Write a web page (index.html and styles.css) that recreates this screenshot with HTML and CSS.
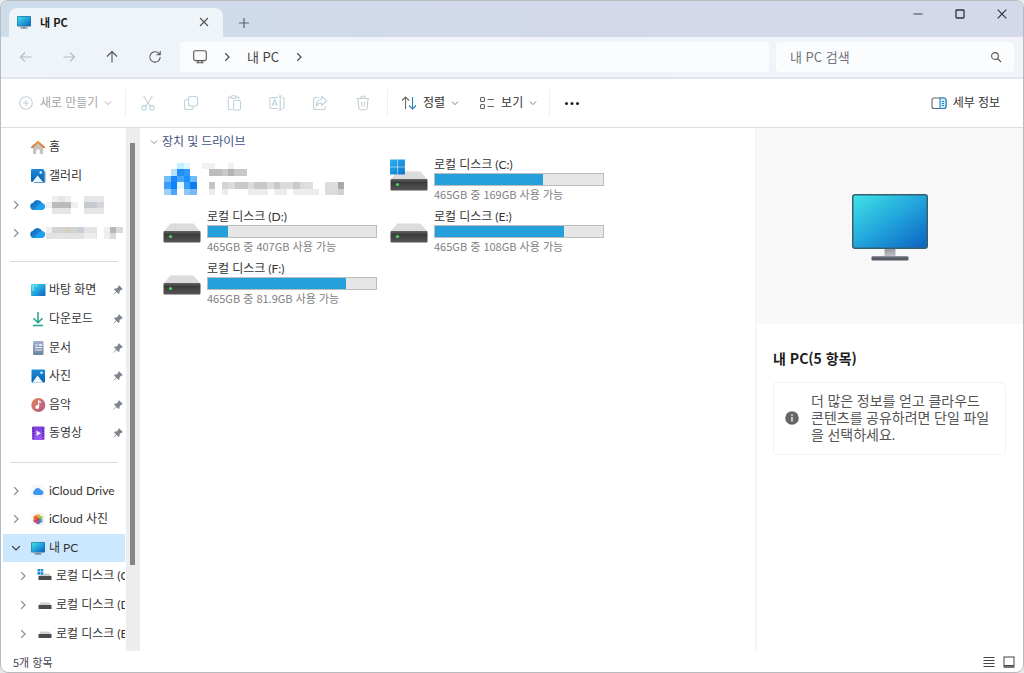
FILE: index.html
```html
<!DOCTYPE html>
<html lang="ko">
<head>
<meta charset="utf-8">
<title>내 PC</title>
<link rel="stylesheet" href="styles.css">
</head>
<body>
<svg class="defs" aria-hidden="true">
  <defs>
    <linearGradient id="g-screen" x1="0" y1="0" x2="1" y2="1"><stop offset="0" stop-color="#3fe3e6"/><stop offset=".5" stop-color="#22a5dc"/><stop offset="1" stop-color="#0c62c2"/></linearGradient>
    <linearGradient id="g-metal" x1="0" y1="0" x2="0" y2="1"><stop offset="0" stop-color="#9599a2"/><stop offset="1" stop-color="#c3c6cc"/></linearGradient>
    <linearGradient id="g-drive" x1="0" y1="0" x2="0" y2="1"><stop offset="0" stop-color="#636363"/><stop offset=".3" stop-color="#3c3c3c"/><stop offset="1" stop-color="#555"/></linearGradient>
    <linearGradient id="g-win" x1="0" y1="0" x2="1" y2="1"><stop offset="0" stop-color="#2fb0ef"/><stop offset="1" stop-color="#0876cc"/></linearGradient>
    <linearGradient id="g-blue" x1="0" y1="0" x2="0" y2="1"><stop offset="0" stop-color="#1c8ada"/><stop offset="1" stop-color="#0a62ad"/></linearGradient>
    <linearGradient id="g-music" x1="0" y1="0" x2="1" y2="1"><stop offset="0" stop-color="#e98458"/><stop offset="1" stop-color="#b0558f"/></linearGradient>
    <linearGradient id="g-cloud" x1="0" y1="0" x2="1" y2="1"><stop offset="0" stop-color="#0a5cae"/><stop offset="1" stop-color="#27a3ee"/></linearGradient>
    <linearGradient id="g-roof" x1="0" y1="0" x2="0" y2="1"><stop offset="0" stop-color="#f0a24c"/><stop offset="1" stop-color="#c56a35"/></linearGradient>
    <linearGradient id="g-video" x1="0" y1="0" x2="0" y2="1"><stop offset="0" stop-color="#7a3fd6"/><stop offset="1" stop-color="#a05cf2"/></linearGradient>
    <linearGradient id="g-doc" x1="0" y1="0" x2="0" y2="1"><stop offset="0" stop-color="#a2b4cb"/><stop offset="1" stop-color="#71849f"/></linearGradient>
  </defs>
  <symbol id="i-pc" viewBox="0 0 16 16"><rect x="1" y="2" width="14" height="10.500" rx="1" fill="#2a6a8c"/><rect x="1.600" y="2.600" width="12.800" height="9.300" fill="url(#g-screen)"/><path d="M7 12.500h2v1.200H7z" fill="#7d8792"/><path d="M4.500 13.400h7v1.100h-7z" fill="#5b6570"/></symbol>
  <symbol id="i-chev" viewBox="0 0 10 10"><path d="M3.2 1.2 7 5 3.2 8.8" fill="none" stroke="currentColor" stroke-width="1.2"/></symbol>
  <symbol id="i-down" viewBox="0 0 10 10"><path d="M1.2 3.2 5 7 8.8 3.2" fill="none" stroke="currentColor" stroke-width="1.2"/></symbol>
  <symbol id="i-drive" viewBox="0 0 38 34"><path d="M8 14h22l7 8H1z" fill="#dcdcde"/><path d="M8 14h22l.9 1H7.1z" fill="#ececee"/><rect x="0.5" y="22" width="37" height="11.5" rx="1" fill="url(#g-drive)"/><circle cx="7.5" cy="27.5" r="1.6" fill="#4fd35f"/></symbol>
  <symbol id="i-sdrive" viewBox="0 0 16 16"><path d="M4 5.500h8l2.500 3h-13z" fill="#cfcfd1"/><rect x="1.500" y="8" width="13" height="4" rx=".6" fill="#4b4b4b"/></symbol>
  <symbol id="i-cloud" viewBox="0 0 16 16"><path d="M4.200 13A3.700 3.700 0 0 1 3.300 5.700 5 5 0 0 1 12 5.900 3.600 3.600 0 0 1 12.200 13z" fill="#1fa0ee"/><path d="M4.200 13A3.700 3.700 0 0 1 3.300 5.700 5 5 0 0 1 12 5.900L9 7.500z" fill="url(#g-cloud)"/></symbol>
  <symbol id="i-pin" viewBox="0 0 12 12"><path d="M7 1.200 10.800 5 9.800 5.800 9.200 5.700 7.600 7.300 7.500 9.200 6.600 10 4.500 7.900 1.500 10.700 1.200 10.400 4 7.400 2 5.300 2.800 4.500 4.700 4.400 6.300 2.800 6.200 2.100z" fill="#7d868f"/></symbol>
</svg>

<div class="window">
  <header class="titlebar">
    <div class="tab">
      <svg class="ic16"><use href="#i-pc"/></svg>
      <span class="tab-title">내 PC</span>
      <button class="plain" aria-label="탭 닫기"><svg class="ic10" viewBox="0 0 10 10"><path d="M1 1l8 8M9 1 1 9" fill="none" stroke="#555" stroke-width="1.100"/></svg></button>
    </div>
    <button class="plain new-tab" aria-label="새 탭"><svg class="ic10" viewBox="0 0 10 10"><path d="M5 0v10M0 5h10" fill="none" stroke="#596070" stroke-width="1.200"/></svg></button>
    <div class="controls">
      <button class="plain" aria-label="최소화"><svg class="ic10" viewBox="0 0 10 10"><path d="M.5 5h9" stroke="#3c4050" stroke-width="1.200"/></svg></button>
      <button class="plain" aria-label="최대화"><svg class="ic10" viewBox="0 0 10 10"><rect x="1" y="1" width="8" height="8" rx=".8" fill="none" stroke="#2c3040" stroke-width="1.300"/></svg></button>
      <button class="plain" aria-label="닫기"><svg class="ic10" viewBox="0 0 10 10"><path d="M.7.7l8.600 8.600M9.300.7.7 9.300" stroke="#2c3040" stroke-width="1.200"/></svg></button>
    </div>
  </header>

  <nav class="navbar">
    <div class="nav-buttons">
      <button class="plain off" aria-label="뒤로"><svg class="ic14" viewBox="0 0 14 14"><path d="M12.500 7h-11M6 2.500 1.500 7 6 11.500"/></svg></button>
      <button class="plain off" aria-label="앞으로"><svg class="ic14" viewBox="0 0 14 14"><path d="M1.500 7h11M8 2.500 12.500 7 8 11.500"/></svg></button>
      <button class="plain" aria-label="위로"><svg class="ic14" viewBox="0 0 14 14"><path d="M7 12.500v-11M2 6.500l5-5 5 5"/></svg></button>
      <button class="plain" aria-label="새로 고침"><svg class="ic14" viewBox="0 0 14 14"><path d="M12.200 7A5.200 5.200 0 1 1 10.800 3.400L12 4.600M12.200 1v3.700H8.500"/></svg></button>
    </div>
    <div class="address">
      <svg class="ic14" viewBox="0 0 14 14"><rect x=".7" y=".7" width="12.600" height="9.900" rx="1.600"/><path d="M5 10.600v2M9 10.600v2M3.500 12.800h7"/></svg>
      <svg class="ic10"><use href="#i-chev"/></svg>
      <a class="crumb" href="#">내 PC</a>
      <svg class="ic10"><use href="#i-chev"/></svg>
    </div>
    <label class="search">
      <input type="search" placeholder="내 PC 검색" aria-label="내 PC 검색">
      <svg class="ic12" viewBox="0 0 12 12"><circle cx="5" cy="5" r="3.400"/><path d="M7.500 7.500l3.500 3.500"/></svg>
    </label>
  </nav>

  <div class="toolbar">
    <button class="cmd new off"><svg class="ic16" viewBox="0 0 16 16"><circle cx="8" cy="8" r="6.300"/><path d="M8 5v6M5 8h6" class="tint"/></svg><span>새로 만들기</span><svg class="ic8"><use href="#i-down"/></svg></button>
    <div class="tools off">
      <button class="plain" aria-label="잘라내기"><svg class="ic16" viewBox="0 0 16 16"><path d="M3.500.8l6.700 10.400M12.500.8 5.800 11.200"/><circle cx="4" cy="12.800" r="2.200" class="tint"/><circle cx="12" cy="12.800" r="2.200" class="tint"/></svg></button>
      <button class="plain" aria-label="복사"><svg class="ic16" viewBox="0 0 16 16"><rect x="5.500" y="1.500" width="9" height="9.500" rx="2" class="tint"/><path d="M5.200 4.800H3.500a2 2 0 0 0-2 2v5.700a2 2 0 0 0 2 2H8a2 2 0 0 0 2-2v-1.300"/></svg></button>
      <button class="plain" aria-label="붙여넣기"><svg class="ic16" viewBox="0 0 16 16"><path d="M6.500 14.500H3.500a1.200 1.200 0 0 1-1.200-1.200v-10a1.200 1.200 0 0 1 1.200-1.200h1.500M10 2.100h1.500a1.200 1.200 0 0 1 1.200 1.200v1.200"/><rect x="5" y=".8" width="5" height="2.600" rx="1.200"/><rect x="7.500" y="5.500" width="7" height="9.500" rx="1.300" class="tint"/></svg></button>
      <button class="plain" aria-label="이름 바꾸기"><svg class="ic16" viewBox="0 0 16 16"><path d="M9 2.500H2.500A1.700 1.700 0 0 0 .8 4.200v7.600a1.700 1.700 0 0 0 1.700 1.700H9M13 2.500h.8a1.500 1.500 0 0 1 1.400 1.700v7.600a1.500 1.500 0 0 1-1.400 1.700H13"/><path d="M3 11l2.700-6.500L8.400 11M4 9h3.500M11.200 1v14M9.700 1h3M9.700 15h3" class="tint"/></svg></button>
      <button class="plain" aria-label="공유"><svg class="ic16" viewBox="0 0 16 16"><path d="M6.500 2.500h-3a2 2 0 0 0-2 2v8a2 2 0 0 0 2 2h8a2 2 0 0 0 2-2v-1.300"/><path d="M9.700 1.500 14.800 6l-5.100 4.500V8C7.300 8 5.700 8.700 4.300 10.800 4.500 7 6.300 4.500 9.700 4.200z" class="tint"/></svg></button>
      <button class="plain" aria-label="삭제"><svg class="ic16" viewBox="0 0 16 16"><path d="M1.500 3.500h13M5.800 3.200a2.200 2.200 0 0 1 4.400 0M3 3.700l.9 9.800a1.500 1.500 0 0 0 1.500 1.300h5.200a1.500 1.500 0 0 0 1.500-1.300l.9-9.800M6.700 6.500v5M9.300 6.500v5"/></svg></button>
    </div>
    <div class="views">
      <button class="cmd"><svg class="ic16" viewBox="0 0 16 16"><path d="M4.500 14V2M1 5.500 4.500 2 8 5.500"/><path d="M11.500 2v12M8 10.500l3.500 3.500 3.500-3.500" class="tint"/></svg><span>정렬</span><svg class="ic8"><use href="#i-down"/></svg></button>
      <button class="cmd"><svg class="ic16" viewBox="0 0 16 16"><rect x="1.500" y="2.500" width="4" height="4" rx="1"/><rect x="1.500" y="9.500" width="4" height="4" rx="1"/><path d="M8.500 4.500h6.500M8.500 11.500h6.500"/></svg><span>보기</span><svg class="ic8"><use href="#i-down"/></svg></button>
    </div>
    <button class="plain more" aria-label="자세히"><svg class="ic16" viewBox="0 0 16 16"><g fill="#222" stroke="none"><circle cx="2.500" cy="8.500" r="1.500"/><circle cx="8" cy="8.500" r="1.500"/><circle cx="13.500" cy="8.500" r="1.500"/></g></svg></button>
    <button class="cmd details-toggle"><svg class="ic16" viewBox="0 0 16 16"><rect x="1" y="3" width="14" height="10.500" rx="2"/><path d="M9 3h4a2 2 0 0 1 2 2v6.500a2 2 0 0 1-2 2H9z" class="tint tintfill"/><path d="M11 6.500h2M11 8.500h2M11 10.500h2" class="tint"/></svg><span>세부 정보</span></button>
  </div>

  <div class="body">
    <aside class="sidebar">
      <ul class="tree">
        <li><a href="#"><i class="tw"></i><svg class="ic16" viewBox="0 0 16 16"><path d="M3 7.500 8 3l5 4.500V15H9.800v-4.500H6.200V15H3z" fill="#c9c3c0"/><path d="M.7 8.300 8 1.500l7.300 6.800-1.300 1.300L8 4.200 2 9.600z" fill="url(#g-roof)"/></svg><span>홈</span></a></li>
        <li><a href="#"><i class="tw"></i><svg class="ic16" viewBox="0 0 16 16"><rect x="3.500" y="3" width="12" height="12" rx="1.500" fill="#6796c4"/><rect x="1" y="1" width="13" height="13" rx="1.300" fill="url(#g-blue)"/><path d="M2.500 14 7.500 7.500 13 14z" fill="#e9f5fd"/><circle cx="10.700" cy="4.500" r="1.200" fill="#e9f5fd"/></svg><span>갤러리</span></a></li>
        <li><a href="#" aria-label="OneDrive"><svg class="tw"><use href="#i-chev"/></svg><svg class="ic16"><use href="#i-cloud"/></svg>
          <svg class="mosaic" viewBox="0 0 78 20"><path d="M0 7h6v6H0zM6 1h6v6H6zM19 1h6v6h-6zM25 7h7v6h-7z" fill="#f0eff0"/><path d="M12 1h7v6h-7zM6 13h19v6H6zM38 1h20v6H38zM38 13h20v6H38z" fill="#e6e5e7"/><path d="M6 7h19v6H6z" fill="#bcbabd"/><path d="M38 7h13v6H38z" fill="#c6c9d0"/><path d="M51 7h7v6h-7z" fill="#d6d6da"/></svg></a></li>
        <li><a href="#" aria-label="OneDrive"><svg class="tw"><use href="#i-chev"/></svg><svg class="ic16"><use href="#i-cloud"/></svg>
          <svg class="mosaic" viewBox="0 0 78 20"><path d="M0 4h51v12H0z" fill="#e4e3e3"/><path d="M0 4h6v6H0zM38 10h12v6H38zM58 4h6v12h-6z" fill="#eee"/><path d="M6 4h13v6H6zM25 4h7v6h-7z" fill="#d4d3d3"/><path d="M19 4h6v6h-6z" fill="#d5d0bd"/><path d="M32 4h6v6h-6z" fill="#c6cdd6"/><path d="M64 4h6v6h-6z" fill="#b7b6b9"/><path d="M70 4h7v6h-7zM64 10h6v6h-6z" fill="#dadada"/></svg></a></li>
        <li class="rule"></li>
        <li><a href="#"><i class="tw"></i><svg class="ic16" viewBox="0 0 16 16"><rect x="1" y="2" width="14.500" height="12" rx="1" fill="url(#g-screen)"/><path d="M2.500 4h1.500M2.500 6h1.500M2.500 8h1.500M5.500 4h1.500" stroke="#dff7fc"/></svg><span>바탕 화면</span></a><svg class="pin"><use href="#i-pin"/></svg></li>
        <li><a href="#"><i class="tw"></i><svg class="ic16" viewBox="0 0 16 16"><path d="M8 1v10.500M3.500 7.200 8 11.700l4.500-4.500M3 14.500h10" fill="none" stroke="#21a58f" stroke-width="1.500"/></svg><span>다운로드</span></a><svg class="pin"><use href="#i-pin"/></svg></li>
        <li><a href="#"><i class="tw"></i><svg class="ic16" viewBox="0 0 16 16"><rect x="3" y="1" width="10.500" height="14" rx="1" fill="url(#g-doc)"/><path d="M5 5h3M5 7.500h7M5 10h7" stroke="#e9eff7" stroke-width="1.200"/><path d="M9 4h3v2H9z" fill="#dfe9f5"/></svg><span>문서</span></a><svg class="pin"><use href="#i-pin"/></svg></li>
        <li><a href="#"><i class="tw"></i><svg class="ic16" viewBox="0 0 16 16"><rect x="1.500" y="1.500" width="13.500" height="13" rx="1" fill="url(#g-blue)"/><path d="M2.500 14.500 7.500 7.500l5.500 7z" fill="#f2f9fe"/><circle cx="11.500" cy="4.800" r="1.200" fill="#e9f5fd"/></svg><span>사진</span></a><svg class="pin"><use href="#i-pin"/></svg></li>
        <li><a href="#"><i class="tw"></i><svg class="ic16" viewBox="0 0 16 16"><circle cx="8.300" cy="8" r="7" fill="url(#g-music)"/><circle cx="7.200" cy="10" r="1.900" fill="#fff"/><path d="M8.600 10V3.800l2.400 1.600" fill="none" stroke="#fff" stroke-width="1.200"/></svg><span>음악</span></a><svg class="pin"><use href="#i-pin"/></svg></li>
        <li><a href="#"><i class="tw"></i><svg class="ic16" viewBox="0 0 16 16"><rect x="2" y="1.500" width="12.500" height="13.500" rx="1" fill="url(#g-video)"/><path d="M3.500 3v11M13 3v11" stroke="#4a2397" stroke-width="1.300" stroke-dasharray="1.500 1"/><path d="M6.500 5.500 11 8.200l-4.500 2.700z" fill="#f4ecff"/></svg><span>동영상</span></a><svg class="pin"><use href="#i-pin"/></svg></li>
        <li class="rule"></li>
        <li><a href="#"><svg class="tw"><use href="#i-chev"/></svg><svg class="ic16" viewBox="0 0 16 16"><rect x="1.500" y="1.500" width="13" height="13" rx="3" fill="#f5f7fa"/><path d="M5 12A2.400 2.400 0 0 1 4.300 7.500 3.600 3.600 0 0 1 11 7a2.600 2.600 0 0 1 .8 5z" fill="#3f96f3"/></svg><span>iCloud Drive</span></a></li>
        <li><a href="#"><svg class="tw"><use href="#i-chev"/></svg><svg class="ic16" viewBox="0 0 16 16"><rect x="1.500" y="1.500" width="13" height="13" rx="3" fill="#f3f3f3"/><circle cx="8" cy="5.500" r="2.300" fill="#f2a93b"/><circle cx="10.500" cy="7" r="2.200" fill="#a3c64b"/><circle cx="10.300" cy="9.800" r="2.200" fill="#4b9ed8"/><circle cx="8" cy="11" r="2.200" fill="#7a67b8"/><circle cx="5.600" cy="9.600" r="2.200" fill="#cf4b68"/><circle cx="5.600" cy="6.700" r="2.200" fill="#ee6b34"/><circle cx="8" cy="8.300" r="1.500" fill="#b04a35"/></svg><span>iCloud 사진</span></a></li>
        <li class="selected"><a href="#"><svg class="tw"><use href="#i-down"/></svg><svg class="ic16"><use href="#i-pc"/></svg><span>내 PC</span></a></li>
        <li class="child"><a href="#"><svg class="tw"><use href="#i-chev"/></svg><svg class="ic16" viewBox="0 0 16 16"><path d="M4 5.500h8l2.500 3h-13z" fill="#cfcfd1"/><rect x="1.500" y="8" width="13" height="4" rx=".6" fill="#4b4b4b"/><path d="M.5 1h2.600v2.600H.5zM3.600 1h2.600v2.600H3.600zM.5 4.100h2.600v2.600H.5zM3.600 4.100h2.600v2.600H3.600z" fill="#1f8fd8"/></svg><span>로컬 디스크 (C:)</span></a></li>
        <li class="child"><a href="#"><svg class="tw"><use href="#i-chev"/></svg><svg class="ic16"><use href="#i-sdrive"/></svg><span>로컬 디스크 (D:)</span></a></li>
        <li class="child"><a href="#"><svg class="tw"><use href="#i-chev"/></svg><svg class="ic16"><use href="#i-sdrive"/></svg><span>로컬 디스크 (E:)</span></a></li>
      </ul>
      <div class="scroll"><div class="thumb"></div></div>
    </aside>

    <main class="content">
      <h2 class="group"><svg class="ic8"><use href="#i-down"/></svg>장치 및 드라이브</h2>
      <div class="drives">
        <div class="drive">
          <svg class="mosaic-wide" viewBox="0 0 184 34" aria-label="iCloud">
            <g transform="translate(1 0)">
              <path d="M13 0h7v6h-7z" fill="#c5f0fb"/><path d="M20 0h6v6h-6z" fill="#e2f7fe"/>
              <path d="M7 6h6v7H7z" fill="#b5def9"/><path d="M13 6h7v7h-7z" fill="#1e90f8"/><path d="M20 6h6v7h-6z" fill="#3398fb"/>
              <path d="M0 13h7v6H0z" fill="#74bdfb"/><path d="M7 13h6v6H7z" fill="#1b87fb"/><path d="M13 13h7v6h-7z" fill="#45a6fc"/><path d="M20 13h6v6h-6z" fill="#1c90fc"/><path d="M26 13h7v6h-7z" fill="#6bbcfb"/>
              <path d="M0 19h7v7H0z" fill="#3d9dfa"/><path d="M7 19h6v7H7z" fill="#0a84fb"/><path d="M13 19h7v7h-7z" fill="#e4f5ff"/><path d="M20 19h6v7h-6z" fill="#3aa0fc"/><path d="M26 19h7v7h-7z" fill="#0d7cee"/>
              <path d="M0 26h7v6H0z" fill="#9ed2fd"/><path d="M7 26h6v6H7z" fill="#4ca7f6"/><path d="M20 26h6v6h-6z" fill="#8ec8fa"/><path d="M26 26h7v6h-7z" fill="#78b8f5"/>
            </g>
            <g transform="translate(39 0)">
              <path d="M0 0h7v6H0zM7 0h6v6H7zM26 0h6v6h-6z" fill="#f0f0f0"/><path d="M7 6h13v7H7z" fill="#bdbdbd"/><path d="M20 6h6v7h-6z" fill="#c9c9c9"/><path d="M26 6h6v7h-6z" fill="#b3b3b3"/><path d="M32 6h13v7H32z" fill="#c8c8c8"/>
              <path d="M7 19h6v7H7z" fill="#c3c3c3"/><path d="M20 19h6v7h-6z" fill="#d3d3d3"/><path d="M26 19h78v7H26z" fill="#dbdbdb"/><path d="M33 19h13v7H33zM52 19h13v7H52zM72 19h6v7h-6zM91 19h7v7h-7z" fill="#c9c9c9"/>
              <path d="M7 26h6v6H7zM20 26h6v6h-6zM46 26h20v6H46zM72 26h13v6H72zM91 26h26v6H91z" fill="#ececec"/><path d="M104 19h7v7h-7z" fill="#dedede"/><path d="M123 19h13v13h-13z" fill="#dcdcdc"/><path d="M136 19h6v7h-6z" fill="#a8a8a8"/><path d="M136 26h6v6h-6z" fill="#d0d0d0"/>
            </g>
          </svg>
        </div>
        <div class="drive">
          <svg class="drive-icon" viewBox="0 0 38 34"><use href="#i-drive"/><path d="M0 2.500h7.200v7.200H0zM7.700 2.500h7.200v7.200H7.700zM0 10.200h7.200v7.200H0zM7.700 10.200h7.200v7.200H7.700z" fill="url(#g-win)"/></svg>
          <div class="drive-info"><span class="name">로컬 디스크 (C:)</span><div class="bar"><div class="fill" style="width:64%"></div></div><span class="free">465GB 중 169GB 사용 가능</span></div>
        </div>
        <div class="drive">
          <svg class="drive-icon"><use href="#i-drive"/></svg>
          <div class="drive-info"><span class="name">로컬 디스크 (D:)</span><div class="bar"><div class="fill" style="width:12%"></div></div><span class="free">465GB 중 407GB 사용 가능</span></div>
        </div>
        <div class="drive">
          <svg class="drive-icon"><use href="#i-drive"/></svg>
          <div class="drive-info"><span class="name">로컬 디스크 (E:)</span><div class="bar"><div class="fill" style="width:77%"></div></div><span class="free">465GB 중 108GB 사용 가능</span></div>
        </div>
        <div class="drive">
          <svg class="drive-icon"><use href="#i-drive"/></svg>
          <div class="drive-info"><span class="name">로컬 디스크 (F:)</span><div class="bar"><div class="fill" style="width:82%"></div></div><span class="free">465GB 중 81.9GB 사용 가능</span></div>
        </div>
      </div>
    </main>

    <aside class="details">
      <div class="preview">
        <svg class="pc-large" viewBox="0 0 76 68"><rect x="0" y="0" width="76" height="55" rx="3" fill="#35606f"/><rect x="1.500" y="1.500" width="73" height="52" rx="1.500" fill="url(#g-screen)"/><path d="M32.500 55h11v8h-11z" fill="url(#g-metal)"/><rect x="19.500" y="62.500" width="37" height="4" rx="1" fill="#565b64"/><path d="M20.500 62h35v1.200h-35z" fill="#8a8f98"/></svg>
      </div>
      <h1 class="details-title">내 PC(5 항목)</h1>
      <div class="info">
        <svg class="ic14" viewBox="0 0 14 14"><circle cx="7" cy="7" r="6.800" fill="#666"/><path d="M7 6v4.500M7 3.300v1.400" stroke="#fff" stroke-width="1.300"/></svg>
        <p>더 많은 정보를 얻고 클라우드<br>콘텐츠를 공유하려면 단일 파일<br>을 선택하세요.</p>
      </div>
    </aside>
  </div>

  <footer class="status">
    <span>5개 항목</span>
    <div class="modes">
      <button class="plain" aria-label="자세히 보기"><svg class="ic12" viewBox="0 0 12 12"><path d="M.5 1.500h11M.5 4.500h11M.5 7.500h11M.5 10.500h11" stroke="#444"/></svg></button>
      <button class="plain" aria-label="큰 아이콘"><svg class="ic12" viewBox="0 0 12 12"><rect x="1" y="1" width="10" height="8.500" fill="none" stroke="#444"/><path d="M.5 11h11" stroke="#444" stroke-width="1.500"/></svg></button>
    </div>
  </footer>
</div>
</body>
</html>
```

FILE: styles.css
```css
* { box-sizing: border-box; }
body {
  margin: 0;
  background: #e8e9ea;
  color: #333;
  font: 12px/16px Lato, "Noto Sans CJK KR", sans-serif;
}
button { border: 0; padding: 0; background: none; font: inherit; color: inherit; }
a { color: inherit; text-decoration: none; }
svg { display: block; flex: none; }
.defs { position: absolute; width: 0; height: 0; }
.ic8 { width: 8px; height: 8px; }
.ic10 { width: 10px; height: 10px; }
.ic12 { width: 12px; height: 12px; }
.ic14 { width: 14px; height: 14px; }
.ic16 { width: 16px; height: 16px; }
.plain { display: grid; place-items: center; }

.window {
  display: flex;
  flex-direction: column;
  height: 100vh;
  overflow: hidden;
  background: #fff;
  border: 1px solid #b9babd;
  border-radius: 8px;
}

.titlebar {
  display: flex;
  height: 36px;
  flex: none;
  padding-left: 8px;
  background: linear-gradient(90deg, #cddceb, #d3d9eb 55%, #d3d8eb);
}
.tab {
  display: flex;
  align-items: center;
  width: 214px;
  margin-top: 7px;
  padding: 0 9px 2px 7px;
  gap: 8px;
  background: #eff4f9;
  border-radius: 8px 8px 0 0;
}
.tab-title { flex: 1; font: 700 11px/16px "Noto Sans CJK KR", sans-serif; color: #1a1a1a; }
.tab .plain { width: 20px; height: 20px; }
.new-tab { width: 42px; padding-top: 7px; }
.controls { display: flex; margin-left: auto; height: 26px; }
.controls .plain { width: 42px; }

.navbar {
  display: flex;
  align-items: center;
  flex: none;
  height: 42px;
  padding-right: 9px;
  gap: 7px;
  background: linear-gradient(90deg, #eef4f9, #f1f3f9);
  border-bottom: 2px solid #e1e4ea;
  font-family: "Noto Sans CJK KR", sans-serif;
}
.navbar svg { fill: none; stroke: #555; stroke-width: 1.1; }
.nav-buttons { display: flex; width: 172px; padding-left: 3px; }
.nav-buttons .plain { width: 43px; flex: none; height: 32px; }
.nav-buttons .off svg { stroke: #b5bbc1; }
.address, .search {
  display: flex;
  align-items: center;
  height: 30px;
  border-radius: 4px;
  background: #fbfcfe;
}
.address { flex: 1; padding-left: 13px; gap: 15px; font-size: 13px; color: #444; }
.search { width: 238px; padding: 0 12px 0 14px; }
.search input {
  flex: 1;
  min-width: 0;
  padding: 0;
  border: 0;
  outline: 0;
  background: none;
  font: inherit;
  font-size: 13px;
}
.search input::placeholder { color: #70757d; opacity: 1; }

.toolbar {
  display: flex;
  align-items: center;
  flex: none;
  height: 49px;
  padding-right: 23px;
  border-bottom: 1px solid #dcdcdc;
}
.toolbar svg { fill: none; stroke: #666; stroke-width: 1.1; color: #777; }
.toolbar .tint { stroke: #2583bd; }
.toolbar .tintfill { fill: #cfeaf8; }
.toolbar .off svg, .toolbar .off.cmd svg { stroke: #c8d0d4; color: #aaa; }
.toolbar .off .tint { stroke: #b9d4e1; }
.toolbar .off.cmd { color: #a6a6a6; }
.cmd { display: flex; align-items: center; gap: 6px; }
.new { width: 124px; padding-left: 17px; }
.tools, .views {
  display: flex;
  align-items: center;
  height: 28px;
  border-left: 1px solid #efefef;
}
.tools { width: 262px; }
.tools .plain { width: 43px; flex: none; }
.views { width: 163px; padding-left: 13px; gap: 20px; border-right: 1px solid #efefef; }
.more { width: 44px; }
.details-toggle { margin-left: auto; }

.body { display: flex; flex: 1; min-height: 0; }
.sidebar { display: flex; width: 139px; flex: none; }
.tree {
  display: grid;
  grid-auto-rows: 1fr;
  flex: 1;
  min-width: 0;
  margin: 0;
  padding: 5px 1px 3px 2px;
  list-style: none;
  overflow: hidden;
}
.tree li { display: flex; align-items: center; min-width: 0; overflow: hidden; }
.tree a { display: flex; align-items: center; flex: 1; min-width: 0; padding-left: 8px; white-space: nowrap; }
.tw { width: 10px; height: 10px; margin-right: 9px; flex: none; color: #888; }
.tree .ic16 { margin-right: 3px; }
.tree .child a { padding-left: 15px; }
.selected { background: #cce8ff; }
.selected .tw { color: #333; }
.rule::before { content: ""; flex: 1; height: 1px; margin: 0 7px; background: #dadada; }
.pin { width: 12px; height: 12px; margin-right: 1px; }
.mosaic { width: 78px; height: 20px; margin-left: -3px; }
.scroll { width: 14px; padding: 15px 5px 0 4px; background: #ededed; }
.thumb { height: 83%; background: #868686; }

.content { flex: 1; min-width: 0; padding: 6px 0 0 10px; }
.group {
  display: flex;
  align-items: center;
  gap: 4px;
  margin: 0 0 7px;
  font-size: 12px;
  font-weight: 400;
  color: #43527f;
}
.group svg { color: #888; }
.drives {
  display: grid;
  grid-template-columns: repeat(auto-fill, 214px);
  gap: 7px 13px;
  padding-left: 13px;
}
.drive { display: flex; gap: 6px; min-height: 45px; }
.drive-icon { width: 38px; height: 34px; }
.mosaic-wide { width: 184px; height: 34px; margin-top: 6px; }
.drive-info { flex: 1; }
.name, .free { display: block; }
.free { font: 11px/16px "Noto Sans CJK KR", sans-serif; color: #808080; }
.bar { height: 13px; border: 1px solid #bcbcbc; background: #e6e6e6; }
.fill { height: 100%; background: #26a0da; }

.details { flex: none; width: 268px; border-left: 2px solid #f6f6f6; }
.preview { display: grid; place-items: center; height: 196px; padding-top: 4px; background: #f8f8f8; }
.pc-large { width: 76px; height: 68px; }
.details-title {
  margin: 25px 16px 15px;
  font: 700 14px/18px "Noto Sans CJK KR", sans-serif;
  color: #1c1c1c;
}
.info {
  display: flex;
  align-items: center;
  margin: 0 17px 0 16px;
  padding: 9px 10px 11px 11px;
  gap: 12px;
  border: 1px solid #f3f3f3;
  border-radius: 4px;
}
.info p { margin: 0; font-size: 14px; line-height: 17px; color: #555; white-space: nowrap; }

.status {
  display: flex;
  align-items: center;
  justify-content: space-between;
  flex: none;
  height: 21px;
  padding: 0 8px 0 12px;
  font: 11px/16px "Noto Sans CJK KR", sans-serif;
  color: #445;
}
.modes { display: flex; gap: 8px; }
```
